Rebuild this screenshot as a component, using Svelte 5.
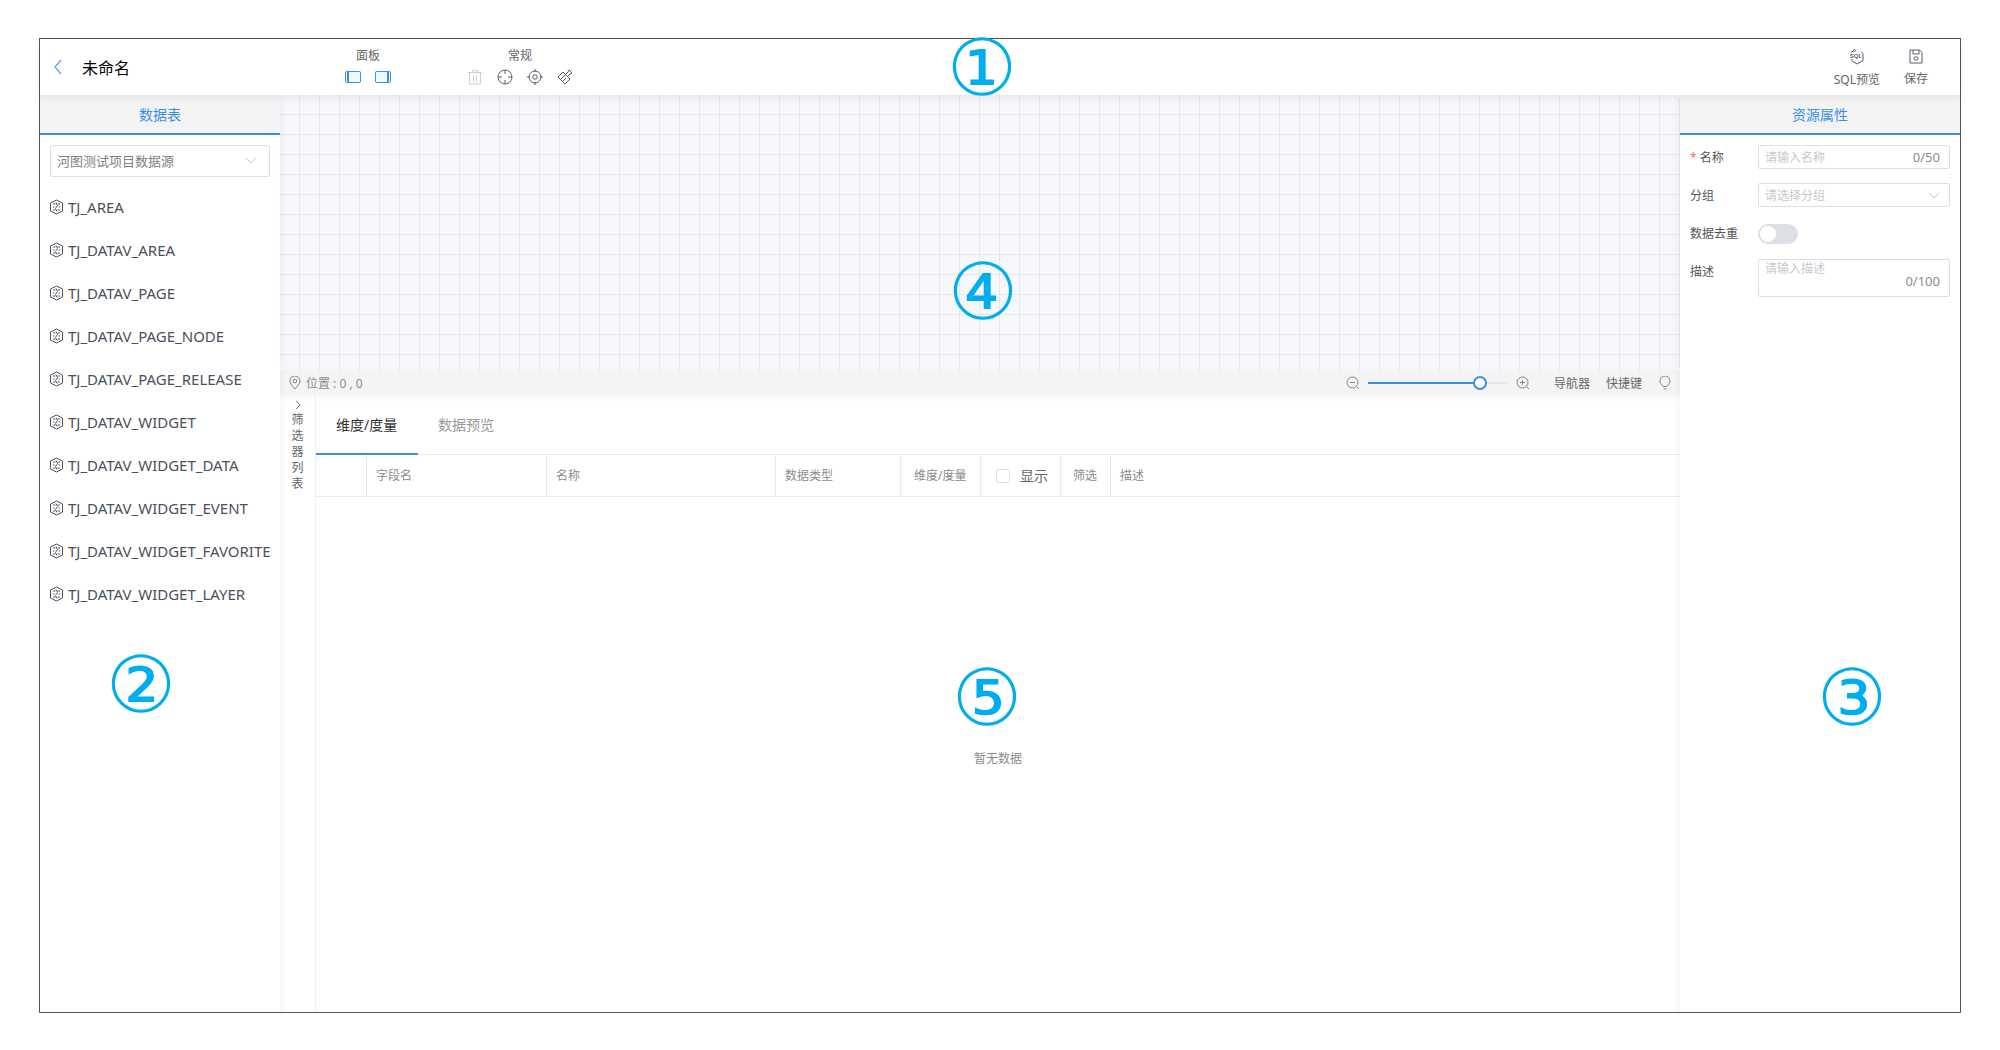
<script>
  const tables = [
    'TJ_AREA',
    'TJ_DATAV_AREA',
    'TJ_DATAV_PAGE',
    'TJ_DATAV_PAGE_NODE',
    'TJ_DATAV_PAGE_RELEASE',
    'TJ_DATAV_WIDGET',
    'TJ_DATAV_WIDGET_DATA',
    'TJ_DATAV_WIDGET_EVENT',
    'TJ_DATAV_WIDGET_FAVORITE',
    'TJ_DATAV_WIDGET_LAYER'
  ];
  const filterChars = ['筛', '选', '器', '列', '表'];
</script>

<div class="frame">
  <header class="top">
    <svg class="back" width="10" height="16" viewBox="0 0 10 16"><path d="M8 1 2 8l6 7" /></svg>
    <span class="title">未命名</span>

    <div class="group panel-group">
      <div class="group-name">面板</div>
      <div class="group-icons gap-14">
        <svg width="16" height="12" viewBox="0 0 16 12"><rect class="blue" x=".5" y=".5" width="15" height="11" rx="1" /><path class="blue2" d="M3 1v10" /></svg>
        <svg width="16" height="12" viewBox="0 0 16 12"><rect class="blue" x=".5" y=".5" width="15" height="11" rx="1" /><path class="blue2" d="M13 1v10" /></svg>
      </div>
    </div>

    <div class="group tool-group">
      <div class="group-name">常规</div>
      <div class="group-icons gap-14">
        <svg class="off" width="16" height="16" viewBox="0 0 16 16"><path d="M1 3.500h14M5.500 3.500V1.500h5v2M2.500 3.500v11.500h11V3.500M6.500 6.500v6M9.500 6.500v6" /></svg>
        <svg class="dark" width="16" height="16" viewBox="0 0 16 16"><circle cx="8" cy="8" r="7" /><path d="M8 1v4M8 11v4M1 8h4M11 8h4" /></svg>
        <svg class="dark" width="16" height="16" viewBox="0 0 16 16"><circle cx="8" cy="8" r="6" /><rect x="6" y="6" width="4" height="4" rx="1" /><path d="M8 0v3M8 13v3M0 8h3M13 8h3" /></svg>
        <svg class="dark" width="16" height="16" viewBox="0 0 16 16"><path d="M1 8 8 15l5-5-7-7zM4 10l4-4M6 12l3-3M9 5l2-2 1-2 3 3-2 1-2 2" /></svg>
      </div>
    </div>

    <div class="actions">
      <div class="action">
        <svg class="dark" width="18" height="16" viewBox="0 0 18 16">
          <path d="M6 1.500 3 3.500M13 2.500l2 2v7l-6 3.500-5-3v-2" />
          <circle cx="6.500" cy="1.500" r="1" />
          <text x="8" y="8.500" class="sql">SQL</text>
        </svg>
        <span>SQL预览</span>
      </div>
      <div class="action">
        <svg class="dark" width="14" height="15" viewBox="0 0 14 15"><path d="M1 1h9.500L13 3.500V14H1zM4 1v4h6V1" /><rect x="5" y="8" width="4" height="3" rx="1" /></svg>
        <span>保存</span>
      </div>
    </div>
  </header>

  <div class="body">
    <aside class="left">
      <div class="tab-head">数据表</div>
      <div class="select source">
        <span>河图测试项目数据源</span>
        <svg class="chev" width="12" height="7" viewBox="0 0 12 7"><path d="m1 1 5 5 5-5" /></svg>
      </div>
      <ul class="tables">
        {#each tables as name}
          <li>
            <svg width="15" height="16" viewBox="0 0 15 16">
              <path class="hex" d="M7.500 1 13.500 4v8l-6 3-6-3V4z" />
              <path class="squiggle" d="M4 5h2.500M8.500 5H11M4 8h1.500M9.500 8H11M4 11h2.500M8.500 11H11M7 3.500 8.500 6.500 6.500 9.500 8 12.500" />
            </svg>
            <span>{name}</span>
          </li>
        {/each}
      </ul>
    </aside>

    <main class="center">
      <div class="canvas"></div>
      <div class="status">
        <svg class="grey-icon" width="12" height="14" viewBox="0 0 12 14"><path d="M6 13C3 10 1 7.500 1 5a5 5 0 0 1 10 0c0 2.500-2 5-5 8z" /><circle cx="6" cy="5" r="1.800" /></svg>
        <span class="pos">位置 : 0 , 0</span>
        <div class="zoom">
          <svg class="grey-icon" width="14" height="14" viewBox="0 0 14 14"><circle cx="6.500" cy="6.500" r="5.500" /><path d="M4 6.500h5M10.500 10.500l2.500 2.500" /></svg>
          <div class="slider"><div class="fill"></div><div class="knob"></div></div>
          <svg class="grey-icon" width="14" height="14" viewBox="0 0 14 14"><circle cx="6.500" cy="6.500" r="5.500" /><path d="M4 6.500h5M6.500 4v5M10.500 10.500l2.500 2.500" /></svg>
        </div>
        <span class="link nav">导航器</span>
        <span class="link keys">快捷键</span>
        <svg class="grey-icon bulb" width="12" height="14" viewBox="0 0 12 14"><path d="M4 10.500C3 8.500 1 7.500 1 5a5 5 0 0 1 10 0c0 2.500-2 3.500-3 5.500zM4.500 13h3" /></svg>
      </div>

      <div class="bottom">
        <div class="filter">
          <svg width="6" height="10" viewBox="0 0 6 10"><path d="m1 1 4 4-4 4" /></svg>
          {#each filterChars as ch}
            <span>{ch}</span>
          {/each}
        </div>
        <div class="data">
          <div class="tabs">
            <div class="tab active">维度/度量</div>
            <div class="tab">数据预览</div>
          </div>
          <div class="thead">
            <div class="th"></div>
            <div class="th">字段名</div>
            <div class="th">名称</div>
            <div class="th">数据类型</div>
            <div class="th dim">维度/度量</div>
            <div class="th show"><i class="check"></i><span>显示</span></div>
            <div class="th filt">筛选</div>
            <div class="th last">描述</div>
          </div>
          <div class="empty">暂无数据</div>
        </div>
      </div>
    </main>

    <aside class="right">
      <div class="tab-head">资源属性</div>
      <div class="form">
        <div class="row">
          <label><em>*</em>名称</label>
          <div class="input"><span class="ph">请输入名称</span><span class="count">0/50</span></div>
        </div>
        <div class="row">
          <label>分组</label>
          <div class="input"><span class="ph">请选择分组</span><svg class="chev" width="12" height="7" viewBox="0 0 12 7"><path d="m1 1 5 5 5-5" /></svg></div>
        </div>
        <div class="row">
          <label>数据去重</label>
          <div class="switch"><i></i></div>
        </div>
        <div class="row tall">
          <label>描述</label>
          <div class="textarea"><span class="ph">请输入描述</span><span class="count">0/100</span></div>
        </div>
      </div>
    </aside>
  </div>

  <span class="mark m1">①</span>
  <span class="mark m2">②</span>
  <span class="mark m3">③</span>
  <span class="mark m4">④</span>
  <span class="mark m5">⑤</span>
</div>

<style>
  :global(body) {
    margin: 0;
    background: #fff;
    font-family: "Noto Sans", "Noto Sans CJK SC", sans-serif;
    color: #555;
  }

  svg {
    fill: none;
    display: block;
    flex: none;
  }

  .frame {
    position: relative;
    box-sizing: border-box;
    width: 1922px;
    height: 975px;
    margin: 38px 0 0 39px;
    border: 1px solid #555;
    display: flex;
    flex-direction: column;
  }

  .top {
    height: 56px;
    flex: none;
    display: flex;
    align-items: center;
    background: #fff;
    position: relative;
    z-index: 2;
    box-shadow: 0 2px 8px rgba(0, 0, 0, 0.08);
  }

  .back {
    margin-left: 13px;
    stroke: #6b9bec;
    stroke-width: 1.2;
  }

  .title {
    margin-left: 19px;
    font-size: 16px;
    color: #000;
    width: 48px;
  }

  .group-name {
    font-size: 12px;
    line-height: 16px;
    text-align: center;
    color: #666;
  }

  .group {
    align-self: flex-start;
    padding-top: 9px;
  }

  .group-icons {
    display: flex;
    align-items: center;
    height: 18px;
    margin-top: 4px;
  }

  .gap-14 {
    gap: 14px;
  }

  .panel-group {
    margin-left: 215px;
  }

  .tool-group {
    margin-left: 76px;
  }

  .blue {
    stroke: #3a8ee6;
    fill: #f2f6fd;
  }

  .blue2 {
    stroke: #3a8ee6;
    stroke-width: 2;
  }

  .off {
    stroke: #cdd0da;
  }

  .dark {
    stroke: #5a5f6c;
  }

  .sql {
    font-size: 6px;
    font-weight: 700;
    font-family: "Liberation Sans", sans-serif;
    fill: #5a5f6c;
    stroke: none;
    text-anchor: middle;
  }

  .actions {
    margin-left: auto;
    margin-right: 32px;
    display: flex;
    gap: 24px;
    align-self: flex-start;
    padding-top: 10px;
  }

  .action {
    display: flex;
    flex-direction: column;
    align-items: center;
    gap: 7px;
    font-size: 12px;
    line-height: 16px;
    color: #666;
  }

  .body {
    flex: 1;
    display: flex;
    min-height: 0;
  }

  .left {
    width: 240px;
    flex: none;
    box-shadow: 2px 0 6px rgba(0, 0, 60, 0.04);
    z-index: 1;
    background: #fff;
  }

  .right {
    width: 280px;
    flex: none;
    box-shadow: -2px 0 6px rgba(0, 0, 60, 0.04);
    z-index: 1;
    background: #fff;
  }

  .tab-head {
    height: 38px;
    line-height: 39px;
    background: #f3f3f3;
    border-bottom: 2px solid #3a8ee6;
    text-align: center;
    font-size: 14px;
    color: #3a8ee6;
  }

  .select {
    display: flex;
    align-items: center;
    justify-content: space-between;
  }

  .source {
    box-sizing: border-box;
    width: 220px;
    height: 32px;
    margin: 10px 0 0 10px;
    padding: 0 12px 2px 6px;
    border: 1px solid #dfe1e8;
    border-radius: 2px;
    font-size: 13px;
    color: #808080;
  }

  .chev {
    stroke: #c4c7d0;
  }

  .tables {
    list-style: none;
    margin: 8px 0 0;
    padding: 0 0 0 9px;
  }

  .tables li {
    height: 43px;
    display: flex;
    align-items: center;
    gap: 4px;
    font-size: 15px;
    color: #4d4f5c;
  }

  .hex {
    stroke: #4d515e;
  }

  .squiggle {
    stroke: #5a5f6c;
  }

  .center {
    flex: 1;
    min-width: 0;
    display: flex;
    flex-direction: column;
  }

  .canvas {
    height: 275px;
    flex: none;
    border-radius: 5px;
    background-color: #f5f7fb;
    background-image:
      linear-gradient(to right, transparent 19px, #e5e7ed 19px),
      linear-gradient(to bottom, transparent 19px, #e5e7ed 19px);
    background-size: 20px 20px;
  }

  .status {
    height: 25px;
    flex: none;
    background: #f4f4f4;
    display: flex;
    align-items: center;
    font-size: 12px;
    color: #666;
    padding-left: 9px;
    box-shadow: 0 3px 6px rgba(0, 0, 0, 0.03);
    position: relative;
  }

  .grey-icon {
    stroke: #7f838e;
  }

  .pos {
    margin-left: 5px;
    color: #8c8c8c;
  }

  .zoom {
    margin-left: auto;
    display: flex;
    align-items: center;
    gap: 8px;
  }

  .slider {
    position: relative;
    width: 140px;
    height: 2px;
    background: #e4e7ed;
  }

  .fill {
    height: 2px;
    width: 112px;
    background: #3a8ee6;
  }

  .knob {
    position: absolute;
    left: 105px;
    top: -6px;
    box-sizing: border-box;
    width: 14px;
    height: 14px;
    border: 2px solid #3a8ee6;
    border-radius: 50%;
    background: #fff;
  }

  .link {
    color: #666;
  }

  .nav {
    margin-left: 24px;
  }

  .keys {
    margin-left: 16px;
  }

  .bulb {
    margin: 0 9px 0 17px;
  }

  .bottom {
    flex: 1;
    min-height: 0;
    display: flex;
  }

  .filter {
    width: 35px;
    flex: none;
    border-right: 1px solid #eceef3;
    display: flex;
    flex-direction: column;
    align-items: center;
    font-size: 12px;
    line-height: 16px;
    padding-top: 5px;
    color: #666;
  }

  .filter svg {
    stroke: #777;
    margin-bottom: 2px;
  }

  .data {
    flex: 1;
    min-width: 0;
    display: flex;
    flex-direction: column;
  }

  .tabs {
    height: 60px;
    flex: none;
    display: flex;
    box-sizing: border-box;
    border-bottom: 1px solid #e8eaf0;
  }

  .tab {
    height: 60px;
    box-sizing: border-box;
    line-height: 60px;
    padding: 0 20px;
    font-size: 14px;
    color: #999;
  }

  .tab.active {
    width: 102px;
    padding-right: 0;
    color: #333;
    border-bottom: 2px solid #3a8ee6;
  }

  .thead {
    height: 41px;
    flex: none;
    display: grid;
    grid-template-columns: 51px 180px 229px 125px 80px 80px 50px 1fr;
    border-bottom: 1px solid #e8eaf0;
    font-size: 12px;
    color: #8c8c8c;
  }

  .th {
    box-sizing: border-box;
    border-right: 1px solid #e8eaf0;
    padding-left: 9px;
    line-height: 42px;
  }

  .th.dim {
    padding-left: 13px;
  }

  .th.filt {
    padding-left: 12px;
  }

  .th.last {
    border-right: 0;
  }

  .th.show {
    display: flex;
    align-items: center;
    gap: 10px;
    padding-left: 15px;
    font-size: 14px;
    color: #666;
  }

  .check {
    width: 14px;
    height: 14px;
    box-sizing: border-box;
    border: 1px solid #dcdfe6;
    border-radius: 2px;
  }

  .empty {
    margin-top: 252px;
    text-align: center;
    font-size: 12px;
    color: #8c8c8c;
  }

  .form {
    padding: 10px 10px 0;
    display: flex;
    flex-direction: column;
    gap: 14px;
  }

  .row {
    display: flex;
    align-items: center;
    height: 24px;
    font-size: 12px;
  }

  .row.tall {
    height: 38px;
    align-items: flex-start;
  }

  .row label {
    width: 68px;
    flex: none;
    color: #555;
    line-height: 24px;
    padding-top: 2px;
  }

  .row.tall label {
    padding-top: 1px;
  }

  .row em {
    color: #f56c6c;
    font-style: normal;
    margin-right: 3px;
  }

  .input,
  .textarea {
    box-sizing: border-box;
    width: 192px;
    border: 1px solid #dcdfe6;
    border-radius: 2px;
    padding: 0 9px 0 6px;
    display: flex;
    justify-content: space-between;
  }

  .input {
    height: 24px;
    align-items: center;
  }

  .textarea {
    height: 38px;
    line-height: 18px;
  }

  .textarea .count {
    align-self: flex-end;
    margin-bottom: 6px;
  }

  .ph {
    color: #c5c8ce;
  }

  .count {
    color: #8c8c8c;
    font-size: 13px;
  }

  .switch {
    width: 40px;
    height: 20px;
    margin-top: 2px;
    border-radius: 10px;
    background: #dcdfe6;
    display: flex;
    align-items: center;
    padding-left: 2px;
    box-sizing: border-box;
  }

  .switch i {
    width: 16px;
    height: 16px;
    border-radius: 50%;
    background: #fff;
  }

  .mark {
    position: absolute;
    z-index: 3;
    font-size: 78px;
    line-height: 80px;
    width: 80px;
    text-align: center;
    color: #00aeef;
    font-family: "DejaVu Sans", sans-serif;
  }

  .m1 { left: 902px; top: -11px; }
  .m2 { left: 61px; top: 606px; }
  .m3 { left: 1772px; top: 619px; }
  .m4 { left: 903px; top: 213px; }
  .m5 { left: 907px; top: 619px; }
</style>
